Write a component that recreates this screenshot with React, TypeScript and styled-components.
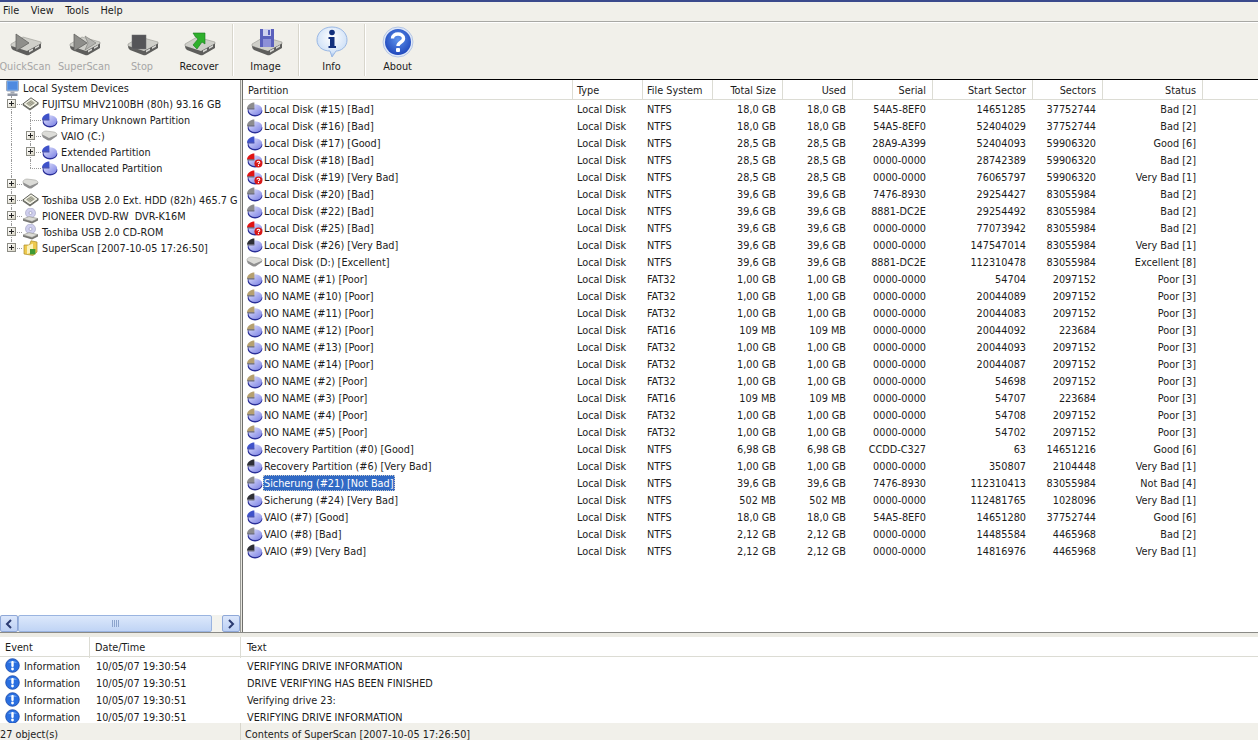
import React from 'react'
import styled, { createGlobalStyle } from 'styled-components'

const GlobalStyle = createGlobalStyle`
  html, body { margin: 0; padding: 0; background: #fff; overflow: hidden; }
  body { font-family: "DejaVu Sans", Tahoma, sans-serif; font-stretch: condensed; font-size: 10.8px; color: #1c1c1c; }
`

type Tone = 'blue' | 'gray' | 'dark' | 'tan' | 'red' | 'disk'

const toneColors: Record<string, string> = {
  blue: '#3f52c9',
  gray: '#8c8c8e',
  dark: '#2e2f36',
  tan: '#b5a070',
  red: '#e01414',
}

const PieIcon = ({ tone }: { tone: Tone }) => {
  if (tone === 'disk') return <FlatDisk />
  return (
    <svg width="17" height="16" viewBox="0 0 17 16">
      <defs>
        <linearGradient id="pieFill" x1="0" y1="0" x2="1" y2="1">
          <stop offset="0" stopColor="#e2e4fc" />
          <stop offset="1" stopColor="#7a80e4" />
        </linearGradient>
      </defs>
      <ellipse cx="9" cy="10" rx="7.4" ry="5.4" fill="#2a2f98" />
      <ellipse cx="9.2" cy="8.6" rx="6.8" ry="5.4" fill="url(#pieFill)" />
      <path d="M8.4 7.4 L8.4 1.6 C4.6 1.6 1.4 4 1 7.4 Z" fill={toneColors[tone]} />
      <path d="M1 7.4 L1 8.4 L8.4 8.4 L8.4 7.4 Z" fill={tone === 'blue' ? '#26309a' : '#55555c'} />
      {tone === 'red' && (
        <>
          <circle cx="12.4" cy="11.6" r="4" fill="#d81818" />
          <path d="M11 10.4 C11 8.9 13.8 8.9 13.8 10.4 C13.8 11.3 12.4 11.2 12.4 12.3" fill="none" stroke="#fff" strokeWidth="1.1" />
          <rect x="11.9" y="13" width="1.1" height="1.1" fill="#fff" />
        </>
      )}
    </svg>
  )
}

const FlatDisk = () => (
  <svg width="17" height="16" viewBox="0 0 17 16">
    <path d="M1 5.5 C1 4.5 3 3 5 3 L13 4 C15 4.4 16.4 6 16 7 L10 11 C9 11.6 7 11.4 6 11 L2 8.4 C1.2 7.8 1 6.6 1 5.5 Z" fill="#dcdcd8" stroke="#a4a4a0" strokeWidth="0.6" />
    <path d="M1.2 6.6 L8 10 L16 6.8 L16 8 L9.4 12.4 C8.6 12.8 7.4 12.6 6.6 12.2 L2 9.4 C1.4 8.8 1.2 7.6 1.2 6.6 Z" fill="#909090" />
  </svg>
)

const DriveIcon = () => (
  <svg width="17" height="16" viewBox="0 0 17 16">
    <path d="M0.8 8 L9 1.8 L16.4 7 L8 13 Z" fill="#f4f4e8" stroke="#4c4d46" strokeWidth="0.9" />
    <path d="M3.6 7.8 L9 3.8 L13.4 7 L8 10.8 Z" fill="#c2c2ae" />
    <path d="M5 7.6 L9.6 5 M6.4 8.6 L11 5.8 M7.8 9.6 L12 6.8" stroke="#74746a" strokeWidth="0.6" />
    <path d="M0.8 8 L0.8 9.4 L8 14.6 L16.4 8.6 L16.4 7 L8 13 Z" fill="#6f7068" />
  </svg>
)

const OpticalIcon = () => (
  <svg width="17" height="16" viewBox="0 0 17 16">
    <circle cx="8.5" cy="5" r="5" fill="#cfcfee" stroke="#a8a8c4" strokeWidth="0.7" />
    <circle cx="8.5" cy="5" r="1.5" fill="#fff" stroke="#8c8cb0" strokeWidth="0.6" />
    <path d="M1 11 L7 8.6 L16 10.6 L10 13.4 Z" fill="#dcdcd6" stroke="#8a8a84" strokeWidth="0.6" />
    <path d="M1 11 L1 12.8 L10 15.6 L16 12.6 L16 10.6 L10 13.4 Z" fill="#777772" />
  </svg>
)

const ScanFolderIcon = () => (
  <svg width="17" height="16" viewBox="0 0 17 16">
    <path d="M2 5 L2 14 L11 15.4 L15 12 L15 2 L9 0.8 L7.5 5 Z" fill="#eec94e" stroke="#a98b2a" strokeWidth="0.7" />
    <path d="M5 6 L11 3.4 L11 12 L5 14 Z" fill="#fbf2bc" />
    <rect x="8" y="9" width="5.4" height="5.4" fill="#3f9a34" />
  </svg>
)

const ComputerIcon = () => (
  <svg width="17" height="17" viewBox="0 0 17 17">
    <rect x="2.5" y="0.5" width="12" height="10.5" rx="1" fill="#6aa2ea" stroke="#a0a8b8" strokeWidth="1" />
    <rect x="4" y="2" width="9" height="7.5" fill="#4f8ae0" />
    <rect x="6.5" y="11.5" width="4" height="2" fill="#a4a9b4" />
    <rect x="3.5" y="13.5" width="10" height="2.5" fill="#8f95a2" />
  </svg>
)

const InfoDot = () => (
  <svg width="15" height="15" viewBox="0 0 15 15">
    <circle cx="7.5" cy="7.5" r="6.8" fill="#2a6fe0" stroke="#1848a8" strokeWidth="0.8" />
    <path d="M3 5 A5.5 5.5 0 0 1 12 5 Z" fill="#7fb0f4" opacity="0.7" />
    <rect x="6.3" y="3" width="2.4" height="6" rx="1" fill="#fff" />
    <circle cx="7.5" cy="11" r="1.4" fill="#fff" />
  </svg>
)

const ExpandBox = styled.span`
  position: absolute;
  left: 50%;
  top: 50%;
  width: 7px;
  height: 7px;
  margin: -5px 0 0 -5px;
  border: 1px solid #8c8c84;
  background: linear-gradient(135deg, #fff, #d8d4c4);
  z-index: 1;
  &::before { content: ''; position: absolute; left: 1px; top: 3px; width: 5px; height: 1px; background: #222; }
  &::after { content: ''; position: absolute; left: 3px; top: 1px; width: 1px; height: 5px; background: #222; }
`

const Page = styled.div`
  width: 1258px;
  height: 740px;
  display: flex;
  flex-direction: column;
  overflow: hidden;
  background: #fff;
`

const MenuBar = styled.div`
  height: 17px;
  padding: 0 0 2px 3px;
  border-top: 2px solid #3b4a8c;
  background: #f1f0ea;
  display: flex;
  align-items: center;
  gap: 11.5px;
  flex: none;
`

const MenuItem = styled.span`
  font-size: 10.8px;
`

const Toolbar = styled.div`
  height: 57px;
  flex: none;
  background: #f1f0ea;
  border-top: 1px solid #a8a8a4;
  box-shadow: inset 0 1px 0 #fff;
  border-bottom: 1px solid #000;
  display: flex;
  align-items: stretch;
`

const ToolButton = styled.div<{ $w: number; $off?: boolean }>`
  width: ${p => p.$w}px;
  flex: none;
  display: flex;
  flex-direction: column;
  align-items: center;
  padding-top: 4px;
  color: ${p => (p.$off ? '#a6a6a6' : '#1c1c1c')};
  line-height: 13px;
  svg { display: block; margin-bottom: 2px; }
`

const ToolSep = styled.div`
  width: 1px;
  margin: 2px 0 3px;
  background: #d8d6cc;
  box-shadow: 1px 0 0 #fff;
  flex: none;
`

const ToolDisk = () => (
  <>
    <path d="M5 18 L17 11 L35 16 L35 18 L21 26 L5 20 Z" fill="#cfcfc9" stroke="#8a8a84" strokeWidth="0.5" />
    <path d="M5 20 C5 22 6 23 7 24 L20 29 C21 29.4 22 29.4 23 29 L35 22 L35 17.5 L21 25 Z" fill="#5e5e5c" />
    <path d="M23 26.4 L27 24.2 L27 22.4 L23 24.6 Z M29 23 L33 20.8 L33 19 L29 21.2 Z" fill="#d8d8d4" />
  </>
)

const ToolIcon = ({ kind }: { kind: string }) => {
  if (kind === 'info') {
    return (
      <svg width="32" height="32" viewBox="0 0 32 32">
        <defs>
          <radialGradient id="infoFill" cx="0.5" cy="0.35" r="0.7">
            <stop offset="0" stopColor="#ffffff" />
            <stop offset="0.7" stopColor="#d4e4f8" />
            <stop offset="1" stopColor="#7ea8e4" />
          </radialGradient>
        </defs>
        <path d="M16 1 C25 1 31 7 31 14 C31 21 25 25 20 25 L16 31 L14 25 C7 25 1 21 1 14 C1 7 7 1 16 1 Z" fill="url(#infoFill)" stroke="#9ab8e4" strokeWidth="1" />
        <circle cx="16" cy="6.5" r="2.8" fill="#12307e" />
        <path d="M12.5 11 L18.5 11 L18.5 20 L20 20 L20 22 L12.5 22 L12.5 20 L14 20 L14 13 L12.5 13 Z" fill="#12307e" />
      </svg>
    )
  }
  if (kind === 'about') {
    return (
      <svg width="32" height="32" viewBox="0 0 32 32">
        <defs>
          <radialGradient id="aboutFill" cx="0.5" cy="0.4" r="0.6">
            <stop offset="0" stopColor="#5f93ec" />
            <stop offset="1" stopColor="#1f48bc" />
          </radialGradient>
        </defs>
        <circle cx="16" cy="16" r="15" fill="#dfe8f8" stroke="#a8bce0" strokeWidth="0.8" />
        <circle cx="16" cy="16" r="13" fill="url(#aboutFill)" />
        <path d="M10.5 12.5 C10.5 6.5 21.5 6.5 21.5 12.5 C21.5 16.5 16 16 16 20" fill="none" stroke="#fff" strokeWidth="3.4" />
        <rect x="14" y="22" width="4" height="4" rx="1" fill="#fff" />
      </svg>
    )
  }
  return (
    <svg width="38" height="32" viewBox="0 0 38 32">
      <ToolDisk />
      {kind === 'quick' && <path d="M10 8 L10 25 L23 17 Z" fill="#8e8e8a" stroke="#5a5a58" strokeWidth="0.7" />}
      {kind === 'super' && (
        <>
          <path d="M20 10 L31 17 L20 24 L23 17 Z" fill="#b4b4b0" stroke="#7a7a76" strokeWidth="0.6" />
          <path d="M9 8 L9 25 L22 17 Z" fill="#8e8e8a" stroke="#5a5a58" strokeWidth="0.7" />
        </>
      )}
      {kind === 'stop' && <rect x="9" y="9" width="14" height="14" fill="#555558" stroke="#6a6a6c" strokeWidth="0.5" />}
      {kind === 'recover' && <path d="M13 7 L25 7 L25 18 L22 16 L17 23 L13 19 L18 13 L15.5 11 Z" fill="#2fb02c" stroke="#167a1c" strokeWidth="0.6" />}
      {kind === 'image' && (
        <>
          <rect x="13" y="3" width="14" height="18" fill="#5a60bc" />
          <rect x="16" y="3" width="8" height="7" fill="#cfd1ee" />
          <rect x="21" y="4" width="2" height="5" fill="#5a60bc" />
          <rect x="16" y="13" width="8" height="8" fill="#8d90d8" />
        </>
      )}
    </svg>
  )
}

const Middle = styled.div`
  flex: none;
  height: 552px;
  display: flex;
  border-bottom: 1px solid #8a8a86;
`

const TreePane = styled.div`
  width: 240px;
  flex: none;
  display: flex;
  flex-direction: column;
  overflow: hidden;
`

const TreeList = styled.div`
  flex: 1;
  overflow: hidden;
`

const TreeRow = styled.div`
  height: 16px;
  display: flex;
  align-items: center;
  white-space: nowrap;
`

const Gutter = styled.span<{ $w: number; $line?: 'full' | 'half' | 'none'; $branch?: boolean }>`
  position: relative;
  align-self: stretch;
  width: ${p => p.$w}px;
  flex: none;
  &::before {
    content: '';
    display: ${p => (p.$line === 'none' ? 'none' : 'block')};
    position: absolute;
    left: 11px;
    top: 0;
    height: ${p => (p.$line === 'half' ? '8px' : '16px')};
    border-left: 1px dotted #9a9a9a;
  }
  &::after {
    content: '';
    display: ${p => (p.$branch ? 'block' : 'none')};
    position: absolute;
    left: 11px;
    right: 0;
    top: 8px;
    border-top: 1px dotted #9a9a9a;
  }
  ${ExpandBox} { left: 12px; }
`

const NodeIcon = styled.span`
  width: 17px;
  height: 16px;
  flex: none;
  display: flex;
  align-items: center;
  svg { display: block; }
`

const TreeLabel = styled.span`
  margin-left: 3px;
`

const RootRow = styled(TreeRow)`
  padding-left: 4px;
  ${TreeLabel} { margin-left: 2px; }
`

const ScrollTrack = styled.div`
  height: 17px;
  flex: none;
  display: flex;
  background: #f3f3ee;
`

const ScrollBtn = styled.div`
  width: 18px;
  flex: none;
  box-sizing: border-box;
  border: 1px solid #8fa8d8;
  border-radius: 2px;
  background: linear-gradient(#dbe6fb, #bcd0f4);
  display: flex;
  align-items: center;
  justify-content: center;
  svg { display: block; }
`

const ScrollThumb = styled.div`
  flex: none;
  width: 194px;
  box-sizing: border-box;
  border: 1px solid #9ab4e0;
  border-radius: 2px;
  background: linear-gradient(#dce8fb, #c0d4f5);
  display: flex;
  align-items: center;
  justify-content: center;
  gap: 1px;
  span { width: 1px; height: 7px; background: #8ca4cc; }
`

const ScrollGap = styled.div`
  flex: 1;
`

const Splitter = styled.div`
  width: 1px;
  flex: none;
  background: #e8e7e0;
  border-left: 1px solid #9a9a96;
  border-right: 1px solid #6f6f6c;
`

const ListPane = styled.div`
  flex: 1;
  min-width: 0;
  overflow: hidden;
`

const COLUMNS = '329px 70px 70px 70px 70px 80px 100px 70px 100px 1fr'

const ListGrid = styled.div`
  display: grid;
  grid-template-columns: ${COLUMNS};
  grid-auto-rows: 17px;
  align-items: start;
  white-space: nowrap;
`

const HeaderCell = styled.div<{ $right?: boolean }>`
  height: 19px;
  line-height: 21px;
  border-bottom: 1px solid #dcdcd4;
  border-right: 1px solid #dcdcd4;
  padding: 0 ${p => (p.$right ? '6px' : '5px')} 0 5px;
  margin-right: -1px;
  text-align: ${p => (p.$right ? 'right' : 'left')};
  overflow: hidden;
`

const HeaderFill = styled.div`
  height: 19px;
  border-bottom: 1px solid #dcdcd4;
`

const HeaderRow = styled(ListGrid)`
  grid-auto-rows: 20px;
`

const Cell = styled.div<{ $right?: boolean }>`
  padding: 0 6px 0 5px;
  line-height: 19px;
  height: 17px;
  text-align: ${p => (p.$right ? 'right' : 'left')};
  overflow: hidden;
`

const NameCell = styled.div`
  display: flex;
  align-items: flex-start;
  padding-left: 3px;
  svg { display: block; flex: none; margin-top: 1px; }
`

const NameText = styled.span<{ $selected?: boolean }>`
  padding: 2px 1px 0;
  margin-top: 1px;
  line-height: 14px;
  color: ${p => (p.$selected ? '#fff' : 'inherit')};
  background: ${p => (p.$selected ? '#316ac5' : 'transparent')};
  outline: ${p => (p.$selected ? '1px dotted #c8c8c8' : 'none')};
  outline-offset: -1px;
`

const LogPane = styled.div`
  flex: 1;
  min-height: 0;
  overflow: hidden;
  border-top: 4px solid #ecebe4;
`

const LOG_COLUMNS = '90px 151px 1fr'

const LogHeader = styled.div`
  display: grid;
  grid-template-columns: ${LOG_COLUMNS};
  height: 19px;
  line-height: 21px;
  border-bottom: 1px solid #dcdcd4;
`

const LogHeaderCell = styled.div`
  padding-left: 5px;
  border-right: 1px solid #dcdcd4;
  &:last-child { border-right: none; padding-left: 6px; }
`

const LogRow = styled.div`
  display: grid;
  grid-template-columns: ${LOG_COLUMNS};
  height: 17px;
  line-height: 19px;
  white-space: nowrap;
`

const LogEvent = styled.div`
  display: flex;
  align-items: flex-start;
  gap: 4px;
  padding-left: 5px;
  height: 17px;
  svg { display: block; flex: none; margin-top: 1px; }
`

const LogCell = styled.div`
  padding-left: 6px;
  height: 17px;
`

const StatusBar = styled.div`
  height: 17px;
  flex: none;
  display: grid;
  grid-template-columns: 240px 1fr;
  background: #f1f0ea;
  line-height: 23px;
  overflow: hidden;
`

const StatusCell = styled.div`
  & + & { padding-left: 4px; border-left: 1px solid #d8d6cc; }
`

type Row = [string, Tone, string, string, string, string, string, string]

const rows: Row[] = [
  ['Local Disk (#15) [Bad]', 'gray', 'NTFS', '18,0 GB', '54A5-8EF0', '14651285', '37752744', 'Bad [2]'],
  ['Local Disk (#16) [Bad]', 'gray', 'NTFS', '18,0 GB', '54A5-8EF0', '52404029', '37752744', 'Bad [2]'],
  ['Local Disk (#17) [Good]', 'blue', 'NTFS', '28,5 GB', '28A9-A399', '52404093', '59906320', 'Good [6]'],
  ['Local Disk (#18) [Bad]', 'red', 'NTFS', '28,5 GB', '0000-0000', '28742389', '59906320', 'Bad [2]'],
  ['Local Disk (#19) [Very Bad]', 'red', 'NTFS', '28,5 GB', '0000-0000', '76065797', '59906320', 'Very Bad [1]'],
  ['Local Disk (#20) [Bad]', 'gray', 'NTFS', '39,6 GB', '7476-8930', '29254427', '83055984', 'Bad [2]'],
  ['Local Disk (#22) [Bad]', 'gray', 'NTFS', '39,6 GB', '8881-DC2E', '29254492', '83055984', 'Bad [2]'],
  ['Local Disk (#25) [Bad]', 'red', 'NTFS', '39,6 GB', '0000-0000', '77073942', '83055984', 'Bad [2]'],
  ['Local Disk (#26) [Very Bad]', 'dark', 'NTFS', '39,6 GB', '0000-0000', '147547014', '83055984', 'Very Bad [1]'],
  ['Local Disk (D:) [Excellent]', 'disk', 'NTFS', '39,6 GB', '8881-DC2E', '112310478', '83055984', 'Excellent [8]'],
  ['NO NAME (#1) [Poor]', 'tan', 'FAT32', '1,00 GB', '0000-0000', '54704', '2097152', 'Poor [3]'],
  ['NO NAME (#10) [Poor]', 'tan', 'FAT32', '1,00 GB', '0000-0000', '20044089', '2097152', 'Poor [3]'],
  ['NO NAME (#11) [Poor]', 'tan', 'FAT32', '1,00 GB', '0000-0000', '20044083', '2097152', 'Poor [3]'],
  ['NO NAME (#12) [Poor]', 'tan', 'FAT16', '109 MB', '0000-0000', '20044092', '223684', 'Poor [3]'],
  ['NO NAME (#13) [Poor]', 'tan', 'FAT32', '1,00 GB', '0000-0000', '20044093', '2097152', 'Poor [3]'],
  ['NO NAME (#14) [Poor]', 'tan', 'FAT32', '1,00 GB', '0000-0000', '20044087', '2097152', 'Poor [3]'],
  ['NO NAME (#2) [Poor]', 'tan', 'FAT32', '1,00 GB', '0000-0000', '54698', '2097152', 'Poor [3]'],
  ['NO NAME (#3) [Poor]', 'tan', 'FAT16', '109 MB', '0000-0000', '54707', '223684', 'Poor [3]'],
  ['NO NAME (#4) [Poor]', 'tan', 'FAT32', '1,00 GB', '0000-0000', '54708', '2097152', 'Poor [3]'],
  ['NO NAME (#5) [Poor]', 'tan', 'FAT32', '1,00 GB', '0000-0000', '54702', '2097152', 'Poor [3]'],
  ['Recovery Partition (#0) [Good]', 'blue', 'NTFS', '6,98 GB', 'CCDD-C327', '63', '14651216', 'Good [6]'],
  ['Recovery Partition (#6) [Very Bad]', 'dark', 'NTFS', '1,00 GB', '0000-0000', '350807', '2104448', 'Very Bad [1]'],
  ['Sicherung (#21) [Not Bad]', 'gray', 'NTFS', '39,6 GB', '7476-8930', '112310413', '83055984', 'Not Bad [4]'],
  ['Sicherung (#24) [Very Bad]', 'dark', 'NTFS', '502 MB', '0000-0000', '112481765', '1028096', 'Very Bad [1]'],
  ['VAIO (#7) [Good]', 'blue', 'NTFS', '18,0 GB', '54A5-8EF0', '14651280', '37752744', 'Good [6]'],
  ['VAIO (#8) [Bad]', 'gray', 'NTFS', '2,12 GB', '0000-0000', '14485584', '4465968', 'Bad [2]'],
  ['VAIO (#9) [Very Bad]', 'dark', 'NTFS', '2,12 GB', '0000-0000', '14816976', '4465968', 'Very Bad [1]'],
]

const logs = [
  ['10/05/07 19:30:54', 'VERIFYING DRIVE INFORMATION'],
  ['10/05/07 19:30:51', 'DRIVE VERIFYING HAS BEEN FINISHED'],
  ['10/05/07 19:30:51', 'Verifying drive 23:'],
  ['10/05/07 19:30:51', 'VERIFYING DRIVE INFORMATION'],
]

const tools = [
  { kind: 'quick', label: 'QuickScan', w: 50, off: true },
  { kind: 'super', label: 'SuperScan', w: 68, off: true },
  { kind: 'stop', label: 'Stop', w: 48, off: true },
  { kind: 'recover', label: 'Recover', w: 66, off: false },
]

const tools2 = [
  { kind: 'image', label: 'Image' },
  { kind: 'info', label: 'Info' },
  { kind: 'about', label: 'About' },
]

const children: [string, boolean, Tone][] = [
  ['Primary Unknown Partition', false, 'blue'],
  ['VAIO (C:)', true, 'disk'],
  ['Extended Partition', true, 'blue'],
  ['Unallocated Partition', false, 'blue'],
]

const App: React.FC = () => (
  <Page>
    <GlobalStyle />
    <MenuBar>
      <MenuItem>File</MenuItem>
      <MenuItem>View</MenuItem>
      <MenuItem>Tools</MenuItem>
      <MenuItem>Help</MenuItem>
    </MenuBar>
    <Toolbar>
      {tools.map(t => (
        <ToolButton key={t.kind} $w={t.w} $off={t.off}>
          <ToolIcon kind={t.kind} />
          {t.label}
        </ToolButton>
      ))}
      {tools2.map(t => (
        <React.Fragment key={t.kind}>
          <ToolSep />
          <ToolButton $w={65}>
            <ToolIcon kind={t.kind} />
            {t.label}
          </ToolButton>
        </React.Fragment>
      ))}
    </Toolbar>
    <Middle>
      <TreePane>
        <TreeList>
          <RootRow>
            <NodeIcon><ComputerIcon /></NodeIcon>
            <TreeLabel>Local System Devices</TreeLabel>
          </RootRow>
          <TreeRow>
            <Gutter $w={22} $line="full" $branch><ExpandBox /></Gutter>
            <NodeIcon><DriveIcon /></NodeIcon>
            <TreeLabel>FUJITSU MHV2100BH (80h) 93.16 GB</TreeLabel>
          </TreeRow>
          {children.map(([label, expand, tone], i) => (
            <TreeRow key={label}>
              <Gutter $w={19} $line="full" />
              <Gutter $w={22} $line={i === 3 ? 'half' : 'full'} $branch>{expand && <ExpandBox />}</Gutter>
              <NodeIcon><PieIcon tone={tone} /></NodeIcon>
              <TreeLabel>{label}</TreeLabel>
            </TreeRow>
          ))}
          <TreeRow>
            <Gutter $w={22} $line="full" $branch><ExpandBox /></Gutter>
            <NodeIcon><FlatDisk /></NodeIcon>
          </TreeRow>
          <TreeRow>
            <Gutter $w={22} $line="full" $branch><ExpandBox /></Gutter>
            <NodeIcon><DriveIcon /></NodeIcon>
            <TreeLabel>Toshiba USB 2.0 Ext. HDD (82h) 465.7 G</TreeLabel>
          </TreeRow>
          <TreeRow>
            <Gutter $w={22} $line="full" $branch><ExpandBox /></Gutter>
            <NodeIcon><OpticalIcon /></NodeIcon>
            <TreeLabel>PIONEER DVD-RW&nbsp;&nbsp;DVR-K16M</TreeLabel>
          </TreeRow>
          <TreeRow>
            <Gutter $w={22} $line="full" $branch><ExpandBox /></Gutter>
            <NodeIcon><OpticalIcon /></NodeIcon>
            <TreeLabel>Toshiba USB 2.0 CD-ROM</TreeLabel>
          </TreeRow>
          <TreeRow>
            <Gutter $w={22} $line="half" $branch><ExpandBox /></Gutter>
            <NodeIcon><ScanFolderIcon /></NodeIcon>
            <TreeLabel>SuperScan [2007-10-05 17:26:50]</TreeLabel>
          </TreeRow>
        </TreeList>
        <ScrollTrack>
          <ScrollBtn>
            <svg width="8" height="10" viewBox="0 0 8 10"><path d="M6 1 L2 5 L6 9" fill="none" stroke="#2a3a70" strokeWidth="2" /></svg>
          </ScrollBtn>
          <ScrollThumb><span /><span /><span /><span /></ScrollThumb>
          <ScrollGap />
          <ScrollBtn>
            <svg width="8" height="10" viewBox="0 0 8 10"><path d="M2 1 L6 5 L2 9" fill="none" stroke="#2a3a70" strokeWidth="2" /></svg>
          </ScrollBtn>
        </ScrollTrack>
      </TreePane>
      <Splitter />
      <ListPane>
        <HeaderRow>
          <HeaderCell>Partition</HeaderCell>
          <HeaderCell>Type</HeaderCell>
          <HeaderCell>File System</HeaderCell>
          <HeaderCell $right>Total Size</HeaderCell>
          <HeaderCell $right>Used</HeaderCell>
          <HeaderCell $right>Serial</HeaderCell>
          <HeaderCell $right>Start Sector</HeaderCell>
          <HeaderCell $right>Sectors</HeaderCell>
          <HeaderCell $right>Status</HeaderCell>
          <HeaderFill />
        </HeaderRow>
        <ListGrid>
          {rows.map(r => (
            <React.Fragment key={r[0]}>
              <NameCell>
                <PieIcon tone={r[1]} />
                <NameText $selected={r[0].startsWith('Sicherung (#21)')}>{r[0]}</NameText>
              </NameCell>
              <Cell>Local Disk</Cell>
              <Cell>{r[2]}</Cell>
              <Cell $right>{r[3]}</Cell>
              <Cell $right>{r[3]}</Cell>
              <Cell $right>{r[4]}</Cell>
              <Cell $right>{r[5]}</Cell>
              <Cell $right>{r[6]}</Cell>
              <Cell $right>{r[7]}</Cell>
              <span />
            </React.Fragment>
          ))}
        </ListGrid>
      </ListPane>
    </Middle>
    <LogPane>
      <LogHeader>
        <LogHeaderCell>Event</LogHeaderCell>
        <LogHeaderCell>Date/Time</LogHeaderCell>
        <LogHeaderCell>Text</LogHeaderCell>
      </LogHeader>
      {logs.map((l, i) => (
        <LogRow key={i}>
          <LogEvent><InfoDot />Information</LogEvent>
          <LogCell>{l[0]}</LogCell>
          <LogCell>{l[1]}</LogCell>
        </LogRow>
      ))}
    </LogPane>
    <StatusBar>
      <StatusCell>27 object(s)</StatusCell>
      <StatusCell>Contents of SuperScan [2007-10-05 17:26:50]</StatusCell>
    </StatusBar>
  </Page>
)

export default App
